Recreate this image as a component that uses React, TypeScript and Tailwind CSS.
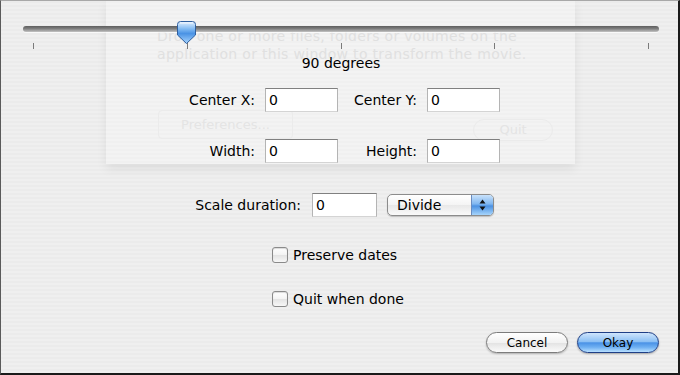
import React from "react";

function Thumb() {
  return (
    <svg width="19" height="23" viewBox="0 0 19 23" className="absolute left-[154px] top-[-5px]">
      <defs>
        <linearGradient id="tg" x1="0" y1="0" x2="0" y2="1">
          <stop offset="0" stopColor="#e4f1ff" />
          <stop offset="0.35" stopColor="#7db8f2" />
          <stop offset="0.55" stopColor="#4a92e4" />
          <stop offset="1" stopColor="#a9d6ff" />
        </linearGradient>
      </defs>
      <path
        d="M3.5 0.5 H15.5 Q18.5 0.5 18.5 3.5 V14 L9.5 22.5 L0.5 14 V3.5 Q0.5 0.5 3.5 0.5 Z"
        fill="url(#tg)"
        stroke="#2f5f9f"
        strokeWidth="1"
      />
      <path d="M3 2 H16" stroke="#ffffff" strokeOpacity="0.7" strokeWidth="1" />
    </svg>
  );
}

function Field({ w }: { w: string }) {
  return (
    <div
      className={`${w} h-[24px] bg-white border border-[#b4b4b4] border-t-[#808080] border-b-[#d4d4d4] flex items-center pl-[3px] text-[14px] text-black`}
    >
      0
    </div>
  );
}

function Check({ label }: { label: string }) {
  return (
    <div className="h-[16px] flex items-center ml-[271px] gap-[5px]">
      <div className="w-[16px] h-[16px] rounded-[3px] border border-[#8a8a8a] bg-[linear-gradient(180deg,#ffffff,#f3f3f3_50%,#e3e3e3_51%,#f7f7f7)] shadow-[inset_0_1px_1px_rgba(0,0,0,0.15)]" />
      <span className="text-[14px] text-black leading-[16px]">{label}</span>
    </div>
  );
}

export default function App() {
  return (
    <div className="relative w-[680px] h-[375px] overflow-hidden border-t border-l border-r-2 border-b-2 border-t-[#a8a8a8] border-l-[#5a5a5a] border-r-[#1a1a1a] border-b-[#1a1a1a] bg-[repeating-linear-gradient(180deg,#ebebeb_0px,#ebebeb_2px,#efefef_2px,#efefef_4px)] font-['DejaVu_Sans',sans-serif] text-black">
      {/* ghosted window behind */}
      <div className="absolute left-[105px] top-[-1px] w-[469px] h-[164px] bg-white/25 shadow-[0_5px_10px_rgba(0,0,0,0.07)]">
        <div className="absolute left-[51px] top-[27px] text-[14px] leading-[18px] text-[#e0e0e0] tracking-[0.3px]">
          <div>Drop one or more files, folders or volumes on the</div>
          <div>application or this window to transform the movie.</div>
        </div>
        <div className="absolute left-[52px] top-[110px] w-[135px] h-[29px] rounded-[4px] border border-[#ebebeb] flex items-center justify-center text-[13px] text-[#e4e4e4]">
          Preferences...
        </div>
        <div className="absolute left-[367px] top-[119px] w-[80px] h-[22px] rounded-full border border-[#ebebeb] flex items-center justify-center text-[13px] text-[#e4e4e4]">
          Quit
        </div>
      </div>

      <div className="relative z-10 flex flex-col">
        {/* slider */}
        <div className="mt-[25px] ml-[22px] w-[636px]">
          <div className="relative h-[6px] rounded-full bg-[linear-gradient(180deg,#5e5e5e,#7a7a7a_40%,#9c9c9c_70%,#c4c4c4)] shadow-[0_1px_0_rgba(255,255,255,0.6)]">
            <Thumb />
          </div>
          <div className="mt-[11px] h-[6px] px-[10px] flex justify-between">
            {[0, 1, 2, 3, 4].map((i) => (
              <div key={i} className="w-px h-[6px] bg-[#7a7a7a]" />
            ))}
          </div>
        </div>

        <div className="mt-[6px] h-[16px] leading-[16px] text-center text-[14px] pl-[3px]">90 degrees</div>

        {/* center row */}
        <div className="mt-[17px] h-[24px] flex items-center ml-[149px]">
          <div className="w-[105px] text-right text-[14px]">Center X:</div>
          <div className="ml-[10px]"><Field w="w-[73px]" /></div>
          <div className="w-[79px] text-right text-[14px]">Center Y:</div>
          <div className="ml-[10px]"><Field w="w-[73px]" /></div>
        </div>

        <div className="mt-[27px] h-[24px] flex items-center ml-[149px]">
          <div className="w-[105px] text-right text-[14px]">Width:</div>
          <div className="ml-[10px]"><Field w="w-[73px]" /></div>
          <div className="w-[79px] text-right text-[14px]">Height:</div>
          <div className="ml-[10px]"><Field w="w-[73px]" /></div>
        </div>

        {/* scale row */}
        <div className="mt-[30px] h-[24px] flex items-center ml-[149px]">
          <div className="w-[151px] text-right text-[14px]">Scale duration:</div>
          <div className="ml-[11px]"><Field w="w-[65px]" /></div>
          <div className="ml-[10px] w-[107px] h-[22px] rounded-[5px] border border-[#8c8c8c] flex overflow-hidden bg-[linear-gradient(180deg,#ffffff,#f4f4f4_50%,#e8e8e8_51%,#fafafa)] shadow-[0_1px_1px_rgba(0,0,0,0.2)]">
            <div className="flex-1 flex items-center pl-[9px] text-[14px]">Divide</div>
            <div className="w-[22px] flex items-center justify-center border-l border-[#6a8cc0] bg-[linear-gradient(180deg,#c9e2fb,#7fb6f0_45%,#4b91e2_55%,#a6d4fb)]">
              <svg width="7" height="12" viewBox="0 0 7 12">
                <path d="M3.5 0.5 L6.5 4.5 H0.5 Z" fill="#111" />
                <path d="M3.5 11.5 L6.5 7.5 H0.5 Z" fill="#111" />
              </svg>
            </div>
          </div>
        </div>

        <div className="mt-[30px]">
          <Check label="Preserve dates" />
        </div>
        <div className="mt-[28px]">
          <Check label="Quit when done" />
        </div>

        {/* buttons */}
        <div className="mt-[25px] flex justify-end pr-[19px] gap-[9px]">
          <div className="w-[82px] h-[21px] rounded-full border border-[#7c7c7c] flex items-center justify-center text-[12px] bg-[linear-gradient(180deg,#ffffff,#f2f2f2_50%,#e2e2e2_51%,#fbfbfb)] shadow-[0_1px_2px_rgba(0,0,0,0.25)]">
            Cancel
          </div>
          <div className="w-[82px] h-[21px] rounded-full border border-[#1f3f86] flex items-center justify-center text-[12px] bg-[linear-gradient(180deg,#cfe5fc,#8cc0f4_45%,#4a92e6_52%,#6fb0f2_75%,#b9e0ff)] shadow-[0_1px_2px_rgba(0,0,0,0.3)]">
            Okay
          </div>
        </div>
      </div>
    </div>
  );
}
